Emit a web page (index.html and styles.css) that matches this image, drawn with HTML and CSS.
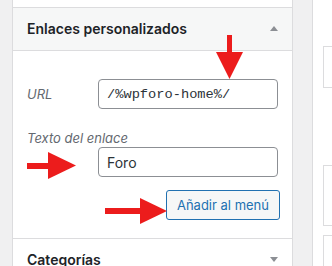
FILE: index.html
```html
<!DOCTYPE html>
<html lang="es">
<head>
  <meta charset="UTF-8">
  <title>Menús</title>
  <link rel="stylesheet" href="styles.css">
</head>
<body>
  <div class="sidebar">
    <div class="section-top"></div>

    <div class="section open">
      <h3 class="section-title">Enlaces personalizados <span class="toggle up"></span></h3>
      <div class="section-content">
        <div class="field-row">
          <label class="field-label">URL</label>
          <input type="text" class="field-input code" value="/%wpforo-home%/">
        </div>
        <label class="field-label block">Texto del enlace</label>
        <input type="text" class="field-input indent" value="Foro">
        <div class="actions">
          <button class="button-secondary">Añadir al menú</button>
        </div>
      </div>
    </div>

    <div class="section">
      <h3 class="section-title">Categorías <span class="toggle down"></span></h3>
    </div>
  </div>

  <div class="gutter"></div>

  <div class="menu-area">
    <div class="menu-box one"></div>
    <div class="menu-box two"></div>
    <div class="menu-box three"></div>
  </div>

  <!-- red annotation arrows -->
  <svg class="annotations" width="332" height="266" viewBox="0 0 332 266">
    <g fill="#ec1c1c">
      <rect x="227" y="35" width="5" height="18"/>
      <polygon points="216,52 243,52 229.5,79"/>
      <rect x="27" y="163" width="23" height="6"/>
      <polygon points="48,152 48,179 76,165.5"/>
      <rect x="105" y="208" width="37" height="6"/>
      <polygon points="140,198 140,224 167,211"/>
    </g>
  </svg>
</body>
</html>
```

FILE: styles.css
```css
* {
  box-sizing: border-box;
}
body {
  margin: 0;
  background: #f0f0f1;
  display: flex;
  align-items: flex-start;
  height: 266px;
  overflow: hidden;
  font-family: Inter, "Liberation Sans", Arial, sans-serif;
  color: #1d2327;
}
.sidebar {
  margin-left: 12px;
  width: 281px;
  height: 266px;
  background: #fff;
  border-left: 1px solid #dcdcde;
  border-right: 1px solid #dcdcde;
}
.section-top {
  height: 8px;
  border-bottom: 1px solid #dcdcde;
}
.section {
  border-bottom: 1px solid #dcdcde;
}
.section-title {
  margin: 0;
  display: flex;
  justify-content: space-between;
  align-items: center;
  padding: 10px 14px 11px 14px;
  line-height: 21px;
  font-size: 14px;
  font-weight: 600;
  background: #fff;
}
.open .section-title {
  background: #f6f7f7;
  border-bottom: 1px solid #dcdcde;
}
.toggle {
  width: 0;
  height: 0;
  margin-right: 0;
  border-left: 4px solid transparent;
  border-right: 4px solid transparent;
}
.toggle.up {
  border-bottom: 5px solid #8c8f94;
}
.toggle.down {
  border-top: 5px solid #8c8f94;
}
.section-content {
  padding: 28px 13px 18px 14px;
}
.field-row {
  display: flex;
  align-items: center;
}
.field-label {
  width: 71px;
  font-size: 13px;
  font-style: italic;
  color: #646970;
  line-height: 18px;
}
.field-label.block {
  display: block;
  width: auto;
  margin-top: 20px;
}
.field-input {
  display: block;
  width: 180px;
  height: 30px;
  padding: 0 8px;
  border: 1px solid #8c8f94;
  border-radius: 4px;
  font-family: Inter, "Liberation Sans", Arial, sans-serif;
  font-size: 14px;
  color: #2c3338;
  background: #fff;
}
.field-input.code {
  font-family: "Liberation Mono", "DejaVu Sans Mono", monospace;
  font-size: 13.7px;
}
.field-input.indent {
  margin-left: 71px;
}
.actions {
  display: flex;
  justify-content: flex-end;
  margin-top: 13px;
  margin-right: -1px;
}
.button-secondary {
  height: 30px;
  padding: 0 10px;
  border: 1px solid #2271b1;
  border-radius: 3px;
  background: #f6f7f7;
  color: #2271b1;
  font-family: Inter, "Liberation Sans", Arial, sans-serif;
  font-size: 13px;
}
.gutter {
  width: 19px;
}
.menu-area {
  flex: 1;
  height: 266px;
  background: #fff;
  border-left: 1px solid #dcdcde;
  padding: 46px 0 0 10px;
}
.menu-box {
  border: 1px solid #dcdcde;
  border-right: none;
  background: #fff;
}
.menu-box.one {
  height: 42px;
}
.menu-box.two {
  height: 61px;
  margin-top: 77px;
}
.menu-box.three {
  height: 40px;
  margin-top: 9px;
}
.annotations {
  position: absolute;
  top: 0;
  left: 0;
  pointer-events: none;
}
```
